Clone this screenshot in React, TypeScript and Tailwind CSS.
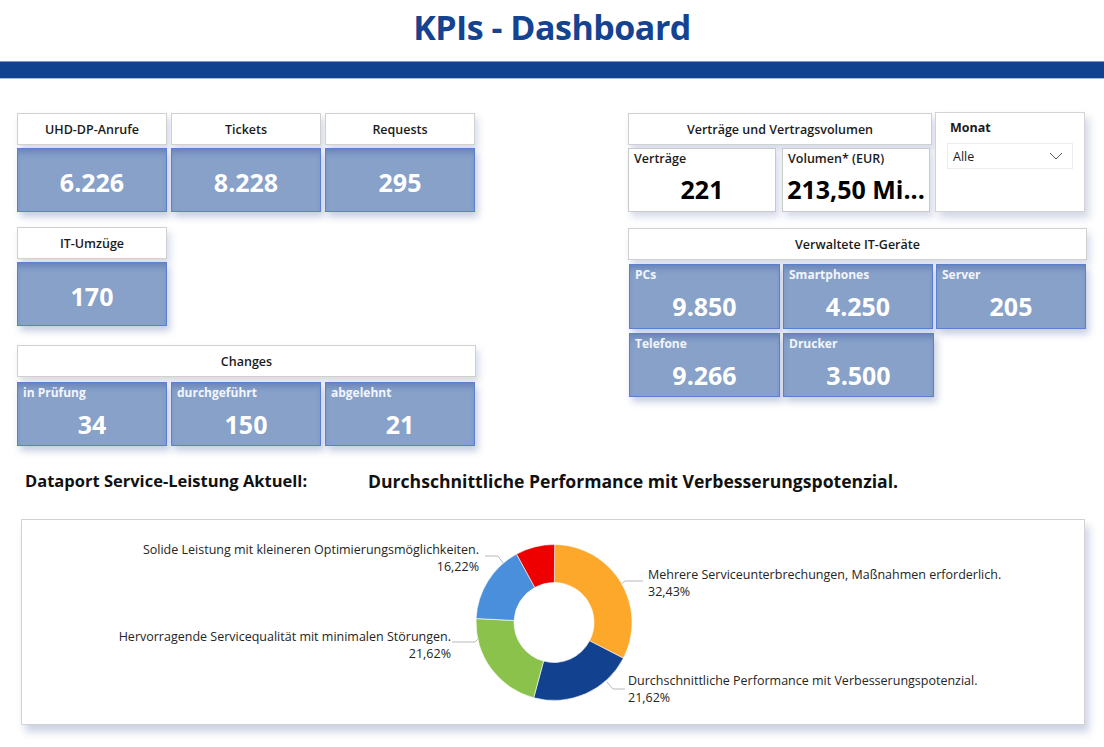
import React from "react";

const FONT = { fontFamily: "'Segoe UI', 'Open Sans', 'Noto Sans', sans-serif" };

function Header({ title, className = "" }: { title: string; className?: string }) {
  return (
    <div
      className={`h-[32px] bg-white border border-[#d0d0d0] flex items-center justify-center pt-[2px] text-[12.5px] font-semibold text-[#1b1b1b] shadow-[3px_5px_7px_rgba(90,110,170,0.25)] ${className}`}
    >
      {title}
    </div>
  );
}

function BigValue({ value, className = "" }: { value: string; className?: string }) {
  return (
    <div
      className={`h-[64px] bg-[#87a1c9] border border-[#5a80d0] flex items-center justify-center pt-[5px] text-white font-bold text-[25px] shadow-[inset_0_6px_6px_-3px_rgba(40,70,150,0.35),3px_5px_7px_rgba(70,90,160,0.3)] ${className}`}
    >
      {value}
    </div>
  );
}

function LabeledValue({ label, value, className = "" }: { label: string; value: string; className?: string }) {
  return (
    <div
      className={`bg-[#87a1c9] border border-[#5a80d0] flex flex-col text-white shadow-[inset_0_6px_6px_-3px_rgba(40,70,150,0.35),3px_5px_7px_rgba(70,90,160,0.3)] ${className}`}
    >
      <div className="h-[18px] pl-[5px] pt-[1px] text-[12px] font-bold leading-[17px] text-[#f2f5fb]">{label}</div>
      <div className="flex-1 flex items-center justify-center text-[25px] font-bold pt-[3px]">{value}</div>
    </div>
  );
}

function Card({ title, value }: { title: string; value: string }) {
  return (
    <div className="w-[150px] flex flex-col gap-[3px]">
      <Header title={title} />
      <BigValue value={value} />
    </div>
  );
}

const slices = [
  { pct: 32.43, color: "#fea82b" },
  { pct: 21.62, color: "#12418f" },
  { pct: 21.62, color: "#8bc24b" },
  { pct: 16.22, color: "#4a8fdb" },
  { pct: 8.11, color: "#ee0000" },
];

function Donut() {
  const cx = 532;
  const cy = 102.5;
  const R = 78;
  const r = 40;
  const pt = (rad: number, deg: number) => {
    const a = (deg * Math.PI) / 180;
    return [cx + rad * Math.sin(a), cy - rad * Math.cos(a)];
  };
  let start = 0.5;
  const paths = slices.map((s, i) => {
    const end = i === slices.length - 1 ? 360.5 : start + (s.pct / 100) * 360;
    const large = end - start > 180 ? 1 : 0;
    const [x1, y1] = pt(R, start);
    const [x2, y2] = pt(R, end);
    const [x3, y3] = pt(r, end);
    const [x4, y4] = pt(r, start);
    const d = `M${x1},${y1} A${R},${R} 0 ${large} 1 ${x2},${y2} L${x3},${y3} A${r},${r} 0 ${large} 0 ${x4},${y4} Z`;
    start = end;
    return <path key={i} d={d} fill={s.color} stroke="#ffffff" strokeWidth={0.6} />;
  });
  return (
    <svg className="absolute left-0 top-0" width={1062} height={204} viewBox="0 0 1062 204">
      <g fill="none" stroke="#b9b9b9" strokeWidth={1}>
        <polyline points="463,36 476,36 481,43" />
        <polyline points="430,122 453,122 456,119" />
        <polyline points="598,65 603,61 621,61" />
        <polyline points="585,162 591,169 603,169" />
      </g>
      {paths}
    </svg>
  );
}

function ChartLabel({ lines, className }: { lines: string[]; className: string }) {
  return (
    <div className={`absolute text-[12.5px] leading-[17px] text-[#252423] whitespace-nowrap ${className}`}>
      {lines.map((l, i) => (
        <div key={i}>{l}</div>
      ))}
    </div>
  );
}

export default function App() {
  return (
    <div className="w-[1104px] h-[747px] bg-white overflow-hidden" style={FONT}>
      <div className="h-[61px] flex items-center justify-center">
        <h1 className="text-[34px] font-bold text-[#134391] tracking-[-0.5px] pb-[6px]">KPIs - Dashboard</h1>
      </div>
      <div className="h-[18px] bg-[#114290] border-t border-b border-t-[#7f9ac6] border-b-[#a9bcd9]" />

      <div className="flex items-start pt-[33px]">
        {/* left column */}
        <div className="ml-[17px] w-[459px] flex flex-col pt-[1px]">
          <div className="flex gap-[4px]">
            <Card title="UHD-DP-Anrufe" value="6.226" />
            <Card title="Tickets" value="8.228" />
            <Card title="Requests" value="295" />
          </div>
          <div className="mt-[15px]">
            <Card title="IT-Umzüge" value="170" />
          </div>
          <div className="mt-[19px] flex flex-col gap-[5px]">
            <Header title="Changes" className="h-[31px]" />
            <div className="flex gap-[4px]">
              <LabeledValue label="in Prüfung" value="34" className="w-[150px] h-[64px]" />
              <LabeledValue label="durchgeführt" value="150" className="w-[150px] h-[64px]" />
              <LabeledValue label="abgelehnt" value="21" className="w-[150px] h-[64px]" />
            </div>
          </div>
        </div>

        {/* right column */}
        <div className="ml-[152px] w-[459px] flex flex-col">
          <div className="flex gap-[3px] items-start">
            <div className="w-[304px] mt-[1px] flex flex-col gap-[3px]">
              <Header title="Verträge und Vertragsvolumen" />
              <div className="flex gap-[6px]">
                <div className="w-[148px] h-[64px] bg-white border border-[#c9c9c9] flex flex-col shadow-[3px_5px_7px_rgba(90,110,170,0.25)]">
                  <div className="pl-[5px] pt-[1px] text-[12.5px] font-semibold leading-[18px] text-[#1b1b1b]">Verträge</div>
                  <div className="flex-1 flex items-center justify-center text-[25px] font-bold text-black">221</div>
                </div>
                <div className="w-[148px] h-[64px] bg-white border border-[#c9c9c9] flex flex-col shadow-[3px_5px_7px_rgba(90,110,170,0.25)]">
                  <div className="pl-[5px] pt-[1px] text-[12.5px] font-semibold leading-[18px] text-[#1b1b1b]">Volumen* (EUR)</div>
                  <div className="flex-1 flex items-center justify-center text-[25px] font-bold text-black whitespace-nowrap">213,50 Mi...</div>
                </div>
              </div>
            </div>
            <div className="w-[150px] h-[100px] bg-white border border-[#d3d3d3] shadow-[4px_6px_8px_rgba(90,110,170,0.28)] px-[11px] pt-[6px]">
              <div className="text-[12.5px] font-bold text-[#1b1b1b] leading-[18px] pl-[3px]">Monat</div>
              <div className="mt-[6px] h-[26px] border border-[#ececec] flex items-center justify-between pl-[5px] pr-[9px]">
                <span className="text-[12.5px] text-[#1b1b1b] pt-[2px]">Alle</span>
                <svg width="14" height="8" viewBox="0 0 14 8">
                  <polyline points="1,1 7,7 13,1" fill="none" stroke="#555" strokeWidth="1" />
                </svg>
              </div>
            </div>
          </div>

          <div className="mt-[16px] flex flex-col gap-[4px]">
            <Header title="Verwaltete IT-Geräte" />
            <div className="pl-[1px] flex flex-col gap-[4px]">
              <div className="flex gap-[3px]">
                <LabeledValue label="PCs" value="9.850" className="w-[151px] h-[65px]" />
                <LabeledValue label="Smartphones" value="4.250" className="w-[150px] h-[65px]" />
                <LabeledValue label="Server" value="205" className="w-[150px] h-[65px]" />
              </div>
              <div className="flex gap-[3px]">
                <LabeledValue label="Telefone" value="9.266" className="w-[151px] h-[64px]" />
                <LabeledValue label="Drucker" value="3.500" className="w-[151px] h-[64px]" />
              </div>
            </div>
          </div>
        </div>
      </div>

      <div className="mt-[24px] h-[22px] flex items-center text-[#111]">
        <div className="pl-[25px] w-[368px] text-[16.5px] font-bold">Dataport Service-Leistung Aktuell:</div>
        <div className="text-[17.6px] font-bold">Durchschnittliche Performance mit Verbesserungspotenzial.</div>
      </div>

      <div className="mt-[27px] ml-[21px] w-[1064px] h-[206px] bg-white border border-[#d2d2d2] relative shadow-[4px_7px_8px_rgba(90,110,170,0.3)]">
        <Donut />
        <ChartLabel
          className="right-[605px] top-[21px] text-right"
          lines={["Solide Leistung mit kleineren Optimierungsmöglichkeiten.", "16,22%"]}
        />
        <ChartLabel
          className="right-[633px] top-[108px] text-right"
          lines={["Hervorragende Servicequalität mit minimalen Störungen.", "21,62%"]}
        />
        <ChartLabel
          className="left-[626px] top-[46px]"
          lines={["Mehrere Serviceunterbrechungen, Maßnahmen erforderlich.", "32,43%"]}
        />
        <ChartLabel
          className="left-[606px] top-[152px]"
          lines={["Durchschnittliche Performance mit Verbesserungspotenzial.", "21,62%"]}
        />
      </div>
    </div>
  );
}
